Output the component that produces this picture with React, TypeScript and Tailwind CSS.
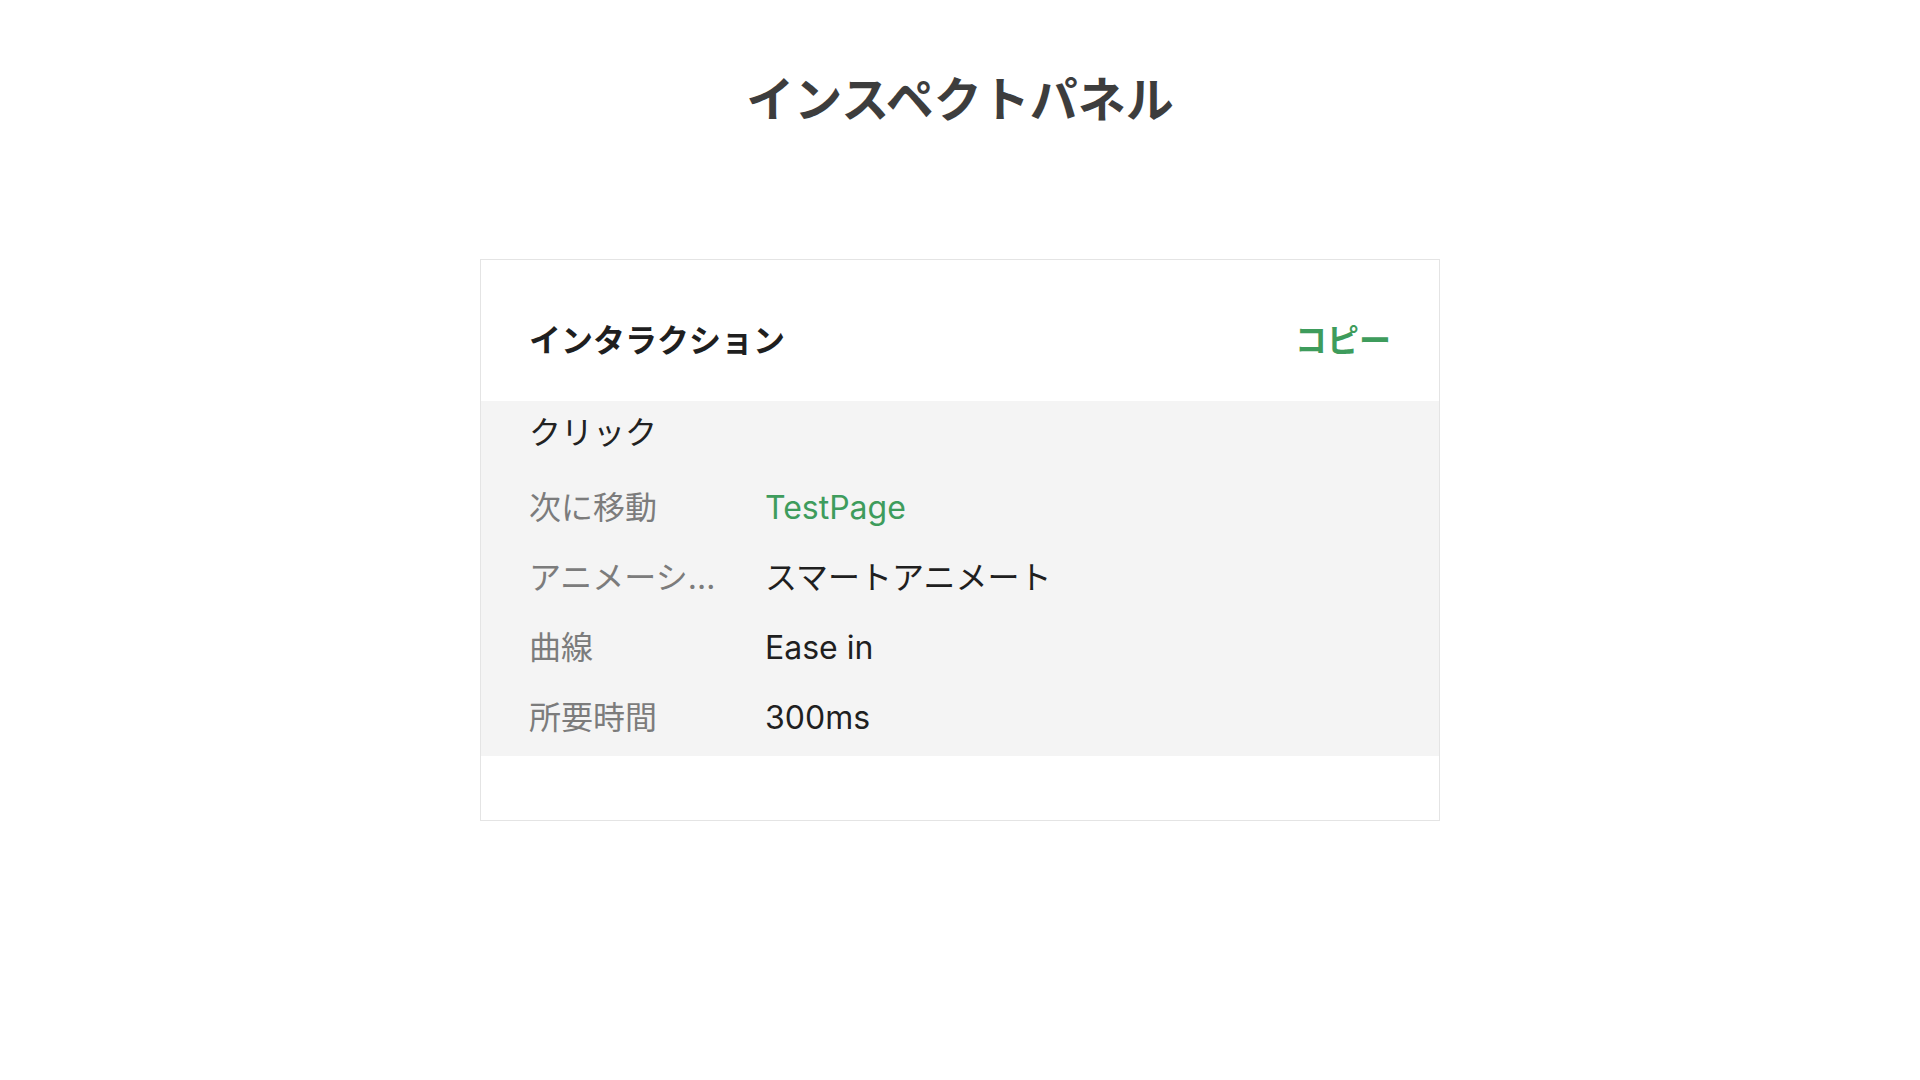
const ROWS = [
  { label: '次に移動', value: 'TestPage', link: true },
  { label: 'アニメーション', value: 'スマートアニメート' },
  { label: '曲線', value: 'Ease in' },
  { label: '所要時間', value: '300ms' },
]

export default function App() {
  return (
    <div className="min-h-screen bg-white font-['Inter','Noto_Sans_CJK_JP',sans-serif]">
      {/* ── Page title ─────────────────────────────── */}
      <h1 className="pt-[64px] text-center text-[48px] font-bold leading-[72px] text-[#3d3d3d]">
        インスペクトパネル
      </h1>

      {/* ── Panel ──────────────────────────────────── */}
      <div className="mx-auto mt-[123px] w-[960px] border border-[#e4e4e4] bg-white">
        <div className="flex items-center justify-between px-[48px] pt-[57px] pb-[36px]">
          <span className="text-[32px] font-bold leading-[48px] text-[#1f1f1f]">
            インタラクション
          </span>
          <button className="text-[32px] font-bold leading-[48px] text-[#3e9c5c]">
            コピー
          </button>
        </div>

        <div className="bg-[#f4f4f4] px-[48px] pt-[8px] pb-[14px]">
          <div className="text-[32px] leading-[48px] text-[#222]">クリック</div>
          <div className="mt-[27px] flex flex-col gap-[22px]">
            {ROWS.map(row => (
              <div key={row.label} className="flex items-baseline text-[32px] leading-[48px]">
                <span className="w-[200px] shrink-0 truncate text-[#7c7c7c]">
                  {row.label}
                </span>
                <span className={`ml-[36px] ${row.link ? 'text-[#3e9c5c]' : 'text-[#1f1f1f]'}`}>
                  {row.value}
                </span>
              </div>
            ))}
          </div>
        </div>

        <div className="h-[64px]" />
      </div>
    </div>
  )
}
